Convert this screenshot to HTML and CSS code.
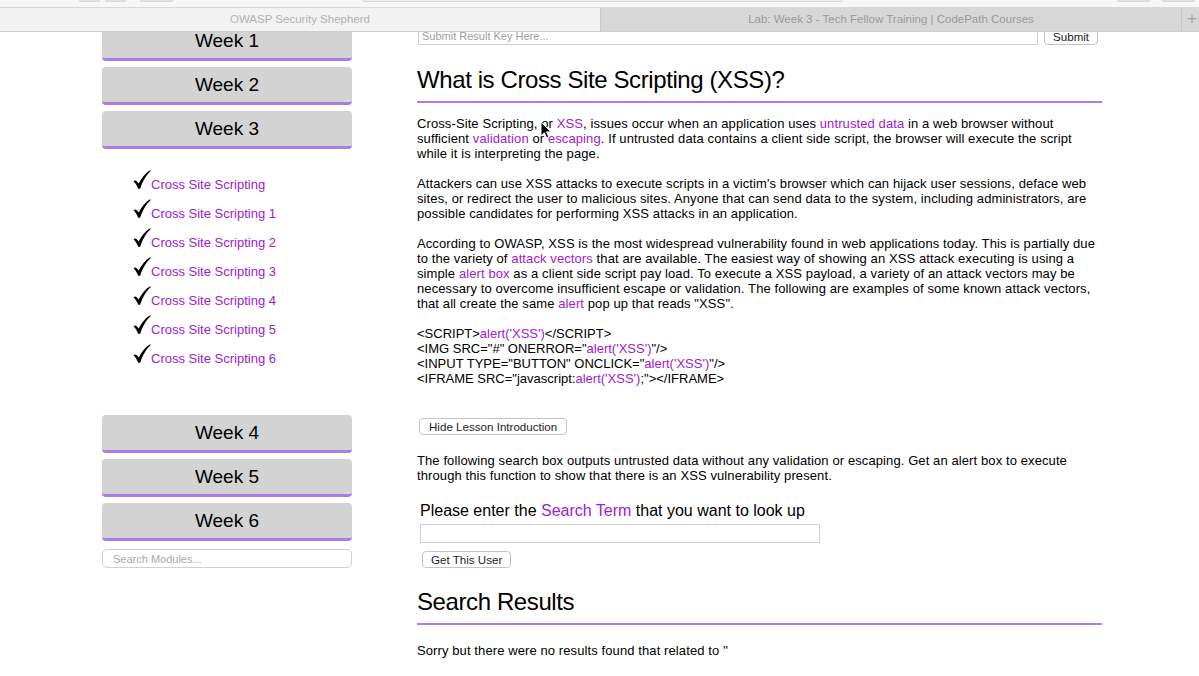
FILE: index.html
```html
<!DOCTYPE html>
<html lang="en">
<head>
<meta charset="utf-8">
<title>OWASP Security Shepherd</title>
<link rel="stylesheet" href="styles.css">
</head>
<body>
<header class="chrome">
  <div class="toolbar">
    <span class="tb tb-a"></span><span class="tb tb-b"></span><span class="tb tb-c"></span>
    <span class="tb tb-url"></span>
    <span class="tb-spacer"></span>
    <span class="tb tb-d"></span><span class="tb tb-e"></span>
  </div>
  <div class="tabs">
    <div class="tab tab-active">OWASP Security Shepherd</div>
    <div class="tab tab-inactive">Lab: Week 3 - Tech Fellow Training | CodePath Courses</div>
    <div class="tab-new">+</div>
  </div>
</header>

<div class="viewport">
  <div class="page">
    <aside class="sidebar">
      <div class="week">Week 1</div>
      <div class="week">Week 2</div>
      <div class="week">Week 3</div>
      <ul class="modules">
        <li><svg class="check" viewBox="0 0 18 19" width="18" height="19"><path d="M0.5 11.2 C2.2 9.6 3.6 10.4 5.6 13.6 C8.6 7.6 12.6 2.8 17.2 0.2 L17.8 1 C13.6 4.6 9.8 10.6 7.2 18.8 L5.2 18.8 C4 15.6 2.4 12.8 0.5 11.2 Z"/></svg><a class="mod-link">Cross Site Scripting</a></li>
        <li><svg class="check" viewBox="0 0 18 19" width="18" height="19"><path d="M0.5 11.2 C2.2 9.6 3.6 10.4 5.6 13.6 C8.6 7.6 12.6 2.8 17.2 0.2 L17.8 1 C13.6 4.6 9.8 10.6 7.2 18.8 L5.2 18.8 C4 15.6 2.4 12.8 0.5 11.2 Z"/></svg><a class="mod-link">Cross Site Scripting 1</a></li>
        <li><svg class="check" viewBox="0 0 18 19" width="18" height="19"><path d="M0.5 11.2 C2.2 9.6 3.6 10.4 5.6 13.6 C8.6 7.6 12.6 2.8 17.2 0.2 L17.8 1 C13.6 4.6 9.8 10.6 7.2 18.8 L5.2 18.8 C4 15.6 2.4 12.8 0.5 11.2 Z"/></svg><a class="mod-link">Cross Site Scripting 2</a></li>
        <li><svg class="check" viewBox="0 0 18 19" width="18" height="19"><path d="M0.5 11.2 C2.2 9.6 3.6 10.4 5.6 13.6 C8.6 7.6 12.6 2.8 17.2 0.2 L17.8 1 C13.6 4.6 9.8 10.6 7.2 18.8 L5.2 18.8 C4 15.6 2.4 12.8 0.5 11.2 Z"/></svg><a class="mod-link">Cross Site Scripting 3</a></li>
        <li><svg class="check" viewBox="0 0 18 19" width="18" height="19"><path d="M0.5 11.2 C2.2 9.6 3.6 10.4 5.6 13.6 C8.6 7.6 12.6 2.8 17.2 0.2 L17.8 1 C13.6 4.6 9.8 10.6 7.2 18.8 L5.2 18.8 C4 15.6 2.4 12.8 0.5 11.2 Z"/></svg><a class="mod-link">Cross Site Scripting 4</a></li>
        <li><svg class="check" viewBox="0 0 18 19" width="18" height="19"><path d="M0.5 11.2 C2.2 9.6 3.6 10.4 5.6 13.6 C8.6 7.6 12.6 2.8 17.2 0.2 L17.8 1 C13.6 4.6 9.8 10.6 7.2 18.8 L5.2 18.8 C4 15.6 2.4 12.8 0.5 11.2 Z"/></svg><a class="mod-link">Cross Site Scripting 5</a></li>
        <li><svg class="check" viewBox="0 0 18 19" width="18" height="19"><path d="M0.5 11.2 C2.2 9.6 3.6 10.4 5.6 13.6 C8.6 7.6 12.6 2.8 17.2 0.2 L17.8 1 C13.6 4.6 9.8 10.6 7.2 18.8 L5.2 18.8 C4 15.6 2.4 12.8 0.5 11.2 Z"/></svg><a class="mod-link">Cross Site Scripting 6</a></li>
      </ul>
      <div class="week">Week 4</div>
      <div class="week">Week 5</div>
      <div class="week">Week 6</div>
      <input class="mod-search" type="text" placeholder="Search Modules...">
    </aside>

    <main class="main">
      <div class="keyrow">
        <input class="keyinput" type="text" placeholder="Submit Result Key Here...">
        <button class="btn btn-submit">Submit</button>
      </div>

      <h2 class="title">What is Cross Site Scripting (XSS)?</h2>

      <p class="para para-first">Cross-Site Scripting, or <a class="term">XSS</a>, issues occur when an application uses <a class="term">untrusted data</a> in a web browser without sufficient <a class="term">validation</a> or <a class="term">escaping</a>. If untrusted data contains a client side script, the browser will execute the script while it is interpreting the page.</p>

      <p class="para">Attackers can use XSS attacks to execute scripts in a victim's browser which can hijack user sessions, deface web sites, or redirect the user to malicious sites. Anyone that can send data to the system, including administrators, are possible candidates for performing XSS attacks in an application.</p>

      <p class="para">According to OWASP, XSS is the most widespread vulnerability found in web applications today. This is partially due to the variety of <a class="term">attack vectors</a> that are available. The easiest way of showing an XSS attack executing is using a simple <a class="term">alert box</a> as a client side script pay load. To execute a XSS payload, a variety of an attack vectors may be necessary to overcome insufficient escape or validation. The following are examples of some known attack vectors, that all create the same <a class="term">alert</a> pop up that reads "XSS".</p>

      <div class="para code">
        <div>&lt;SCRIPT&gt;<span class="term">alert('XSS')</span>&lt;/SCRIPT&gt;</div>
        <div>&lt;IMG SRC="#" ONERROR="<span class="term">alert('XSS')</span>"/&gt;</div>
        <div>&lt;INPUT TYPE="BUTTON" ONCLICK="<span class="term">alert('XSS')</span>"/&gt;</div>
        <div>&lt;IFRAME SRC="javascript:<span class="term">alert('XSS')</span>;"&gt;&lt;/IFRAME&gt;</div>
      </div>

      <button class="btn btn-hide">Hide Lesson Introduction</button>

      <p class="para para-task">The following search box outputs untrusted data without any validation or escaping. Get an alert box to execute through this function to show that there is an XSS vulnerability present.</p>

      <p class="prompt">Please enter the <a class="term">Search Term</a> that you want to look up</p>
      <input class="search-term" type="text">
      <div class="getrow"><button class="btn">Get This User</button></div>

      <h2 class="title title-results">Search Results</h2>
      <p class="para para-sorry">Sorry but there were no results found that related to ''</p>
    </main>
  </div>

  <svg class="cursor" viewBox="0 0 12 18" width="12" height="18"><path d="M1 1 L1 15 L4.3 11.8 L6.7 17 L8.9 16 L6.5 10.9 L11 10.9 Z" fill="#000" stroke="#fff" stroke-width="1" stroke-linejoin="round"/></svg>
</div>
</body>
</html>
```

FILE: styles.css
```css
* { box-sizing: border-box; }

html, body {
  margin: 0;
  padding: 0;
}

body {
  width: 1199px;
  height: 676px;
  overflow: hidden;
  background: #ffffff;
  color: #000000;
  font-family: "Liberation Sans", Arial, Helvetica, sans-serif;
}

/* ---------- browser chrome ---------- */
.chrome {
  height: 32px;
  background: #f5f5f5;
}

.toolbar {
  height: 8px;
  display: flex;
  align-items: flex-start;
  border-bottom: 1px solid #d8d8d8;
  background: #f6f6f6;
}

.tb {
  display: block;
  height: 2px;
  background: #e3e3e3;
  border: 1px solid #d6d6d6;
  border-top: 0;
  border-radius: 0 0 3px 3px;
}

.tb-a { width: 21px; margin-left: 79px; }
.tb-b { width: 21px; margin-left: 5px; }
.tb-c { width: 33px; margin-left: 14px; }
.tb-url { width: 481px; margin-left: 189px; background: #ececec; }
.tb-spacer { flex: 1; }
.tb-d { width: 33px; }
.tb-e { width: 33px; margin-left: 12px; margin-right: 4px; }

.tabs {
  display: flex;
  height: 24px;
  border-bottom: 1px solid #d0d0d0;
}

.tab {
  height: 23px;
  line-height: 23px;
  text-align: center;
  font-size: 11.5px;
  white-space: nowrap;
  overflow: hidden;
}

.tab-active {
  width: 600px;
  background: #f2f2f2;
  color: #b2b2b2;
}

.tab-inactive {
  flex: 1;
  background: #d7d7d7;
  color: #999999;
  border-left: 1px solid #c8c8c8;
}

.tab-new {
  flex: none;
  width: 18px;
  height: 23px;
  padding-left: 3px;
  line-height: 21px;
  text-align: center;
  background: #d7d7d7;
  border-left: 1px solid #c6c6c6;
  color: #a5a5a5;
  font-size: 17px;
  font-weight: 300;
}

/* ---------- page ---------- */
.viewport {
  position: relative;
  height: 644px;
  overflow: hidden;
}

.page {
  display: flex;
  align-items: flex-start;
  margin-top: -9px;
}

.sidebar {
  flex: none;
  width: 250px;
  margin-left: 102px;
}

.week {
  height: 38px;
  line-height: 36px;
  background: #d3d3d3;
  border-bottom: 3px solid #a97ee8;
  border-radius: 4px;
  text-align: center;
  font-size: 19px;
  color: #000;
}

.week + .week { margin-top: 6px; }

.modules {
  list-style: none;
  margin: 21px 0 42px;
  padding: 0 0 0 31px;
}

.modules li {
  display: flex;
  align-items: flex-start;
  height: 29px;
}

.check {
  flex: none;
  display: block;
  fill: #000;
}

.mod-link {
  margin-top: 7px;
  font-size: 13px;
  line-height: 15px;
  color: #a020d4;
  text-decoration: none;
}

.mod-search {
  display: block;
  width: 250px;
  height: 19px;
  margin-top: 8px;
  padding: 0 10px;
  border: 1px solid #d0d0d0;
  border-radius: 5px;
  font-family: "Liberation Sans", Arial, sans-serif;
  font-size: 11px;
  color: #333;
  background: #fff;
}

.mod-search::placeholder { color: #a8a8a8; }

.main {
  flex: none;
  width: 685px;
  margin-left: 65px;
}

.keyrow {
  display: flex;
  align-items: flex-start;
  margin-top: 4px;
}

.keyinput {
  width: 620px;
  height: 18px;
  margin-left: 1px;
  padding: 0 3px;
  border: 1px solid #cfcfcf;
  font-family: "Liberation Sans", Arial, sans-serif;
  font-size: 11px;
  background: #fff;
}

.keyinput::placeholder { color: #9d9d9d; }

.btn {
  height: 17px;
  padding: 0 8px;
  background: #ffffff;
  border: 1px solid #c4c4c4;
  border-radius: 4px;
  font-family: "Liberation Sans", Arial, sans-serif;
  font-size: 11.6px;
  line-height: 15px;
  color: #1e1e1e;
}

.btn-submit {
  margin-left: 6px;
  margin-top: 1px;
}

.title {
  margin: 21px 0 0;
  padding-bottom: 7px;
  border-bottom: 2px solid #a97ee8;
  font-size: 24px;
  font-weight: normal;
  line-height: 28px;
  letter-spacing: -0.4px;
  color: #000;
}

.para {
  margin: 15px 0 0;
  font-size: 13px;
  line-height: 15px;
  letter-spacing: 0.1px;
}

.para-first { margin-top: 13px; }

.code { letter-spacing: 0; }

.term {
  color: #a020d4;
  text-decoration: none;
}

.btn-hide {
  display: block;
  margin: 32px 0 0 2px;
  padding: 0 9px;
}

.para-task { margin-top: 18px; }

.prompt {
  margin: 18px 0 0 3px;
  font-size: 16px;
  line-height: 19px;
}

.search-term {
  display: block;
  width: 400px;
  height: 19px;
  margin: 4px 0 0 3px;
  border: 1px solid #d0d0d0;
  background: #fff;
}

.getrow {
  margin: 7px 0 0 5px;
}

.title-results { margin-top: 20px; }

.para-sorry { margin-top: 18px; }

.cursor {
  position: absolute;
  left: 540px;
  top: 89px;
}
```
